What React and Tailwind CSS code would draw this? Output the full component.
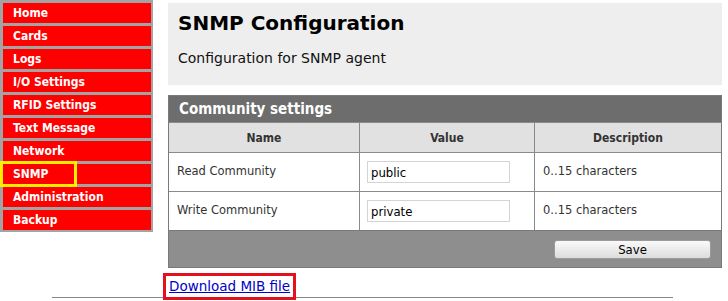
import React from "react";

const menu = [
  "Home",
  "Cards",
  "Logs",
  "I/O Settings",
  "RFID Settings",
  "Text Message",
  "Network",
  "SNMP",
  "Administration",
  "Backup",
];

const rows = [
  { name: "Read Community", value: "public", desc: "0..15 characters" },
  { name: "Write Community", value: "private", desc: "0..15 characters" },
];

const narrow = { fontFamily: '"DejaVu Sans Condensed", "DejaVu Sans", Tahoma, sans-serif' };
const wide = { fontFamily: '"DejaVu Sans", Verdana, sans-serif' };

export default function App() {
  return (
    <div className="relative w-[728px] h-[301px] bg-white overflow-hidden text-black" style={wide}>
      <div className="flex items-start">
        {/* sidebar */}
        <div className="w-[153px] bg-[#a3a3a3] pl-[3px] pr-[2px] pt-[3px] pb-[2px] flex flex-col gap-[3px]" style={narrow}>
          {menu.map((item) => (
            <div
              key={item}
              className="relative h-[20px] bg-[#ff0000] pl-[10px] flex items-center text-white font-bold text-[12px] leading-none"
            >
              {item === "SNMP" && (
                <div className="absolute left-[-3px] top-[-3px] w-[77px] h-[26px] border-[3px] border-[#ffee00]" />
              )}
              <span className="relative">{item}</span>
            </div>
          ))}
        </div>

        {/* main */}
        <div className="ml-[15px] w-[554px] flex flex-col">
          <div className="mt-[3px] h-[82px] bg-[#eeeeee] px-[10px] pt-[7px]">
            <h1 className="text-[20px] font-bold leading-[26px]">SNMP Configuration</h1>
            <p className="mt-[14px] text-[14px] leading-[17px] text-[#111]">Configuration for SNMP agent</p>
          </div>

          <div className="mt-[10px] border border-[#7a7a7a]">
            <div className="h-[26px] bg-[#6d6d6d] pl-[10px] flex items-center text-white font-bold text-[15px]" style={narrow}>
              Community settings
            </div>
            <div className="grid grid-cols-[190px_175px_1fr] text-[11.5px]">
              <div className="h-[30px] bg-[#e1e1e1] border-t border-[#8a8a8a] flex items-center justify-center font-bold text-[12px] text-[#333]" style={narrow}>Name</div>
              <div className="h-[30px] bg-[#e1e1e1] border-t border-l border-[#8a8a8a] flex items-center justify-center font-bold text-[12px] text-[#333]" style={narrow}>Value</div>
              <div className="h-[30px] bg-[#e1e1e1] border-t border-l border-[#8a8a8a] flex items-center justify-center font-bold text-[12px] text-[#333]" style={narrow}>Description</div>
              {rows.map((r) => (
                <React.Fragment key={r.name}>
                  <div className="h-[39px] border-t border-[#8a8a8a] flex items-center pl-[8px] text-[#333]">{r.name}</div>
                  <div className="h-[39px] border-t border-l border-[#8a8a8a] flex items-center pl-[7px]">
                    <input
                      readOnly
                      value={r.value}
                      className="w-[143px] h-[22px] border border-[#d4d4d4] bg-white px-[3px] text-[13px] text-black outline-none"
                      style={narrow}
                    />
                  </div>
                  <div className="h-[39px] border-t border-l border-[#8a8a8a] flex items-center pl-[8px] text-[#333]">{r.desc}</div>
                </React.Fragment>
              ))}
            </div>
            <div className="h-[37px] bg-[#8e8e8e] border-t border-[#7a7a7a] flex items-center justify-end pr-[10px]">
              <button className="w-[157px] h-[19px] rounded-[3px] border border-[#9a9a9a] bg-gradient-to-b from-[#fafafa] to-[#dcdcdc] text-[13px] leading-none text-black" style={narrow}>
                Save
              </button>
            </div>
          </div>
        </div>
      </div>

      {/* footer link + rule */}
      <div className="absolute left-[52px] top-[297px] w-[621px] border-t border-[#888]" />
      <div className="absolute left-[163px] top-[273px] border-[3px] border-[#e4101e] bg-white px-[3px] h-[27px] flex items-center">
        <a href="#" className="text-[#0000cc] underline text-[13.5px] leading-none">Download MIB file</a>
      </div>
    </div>
  );
}
